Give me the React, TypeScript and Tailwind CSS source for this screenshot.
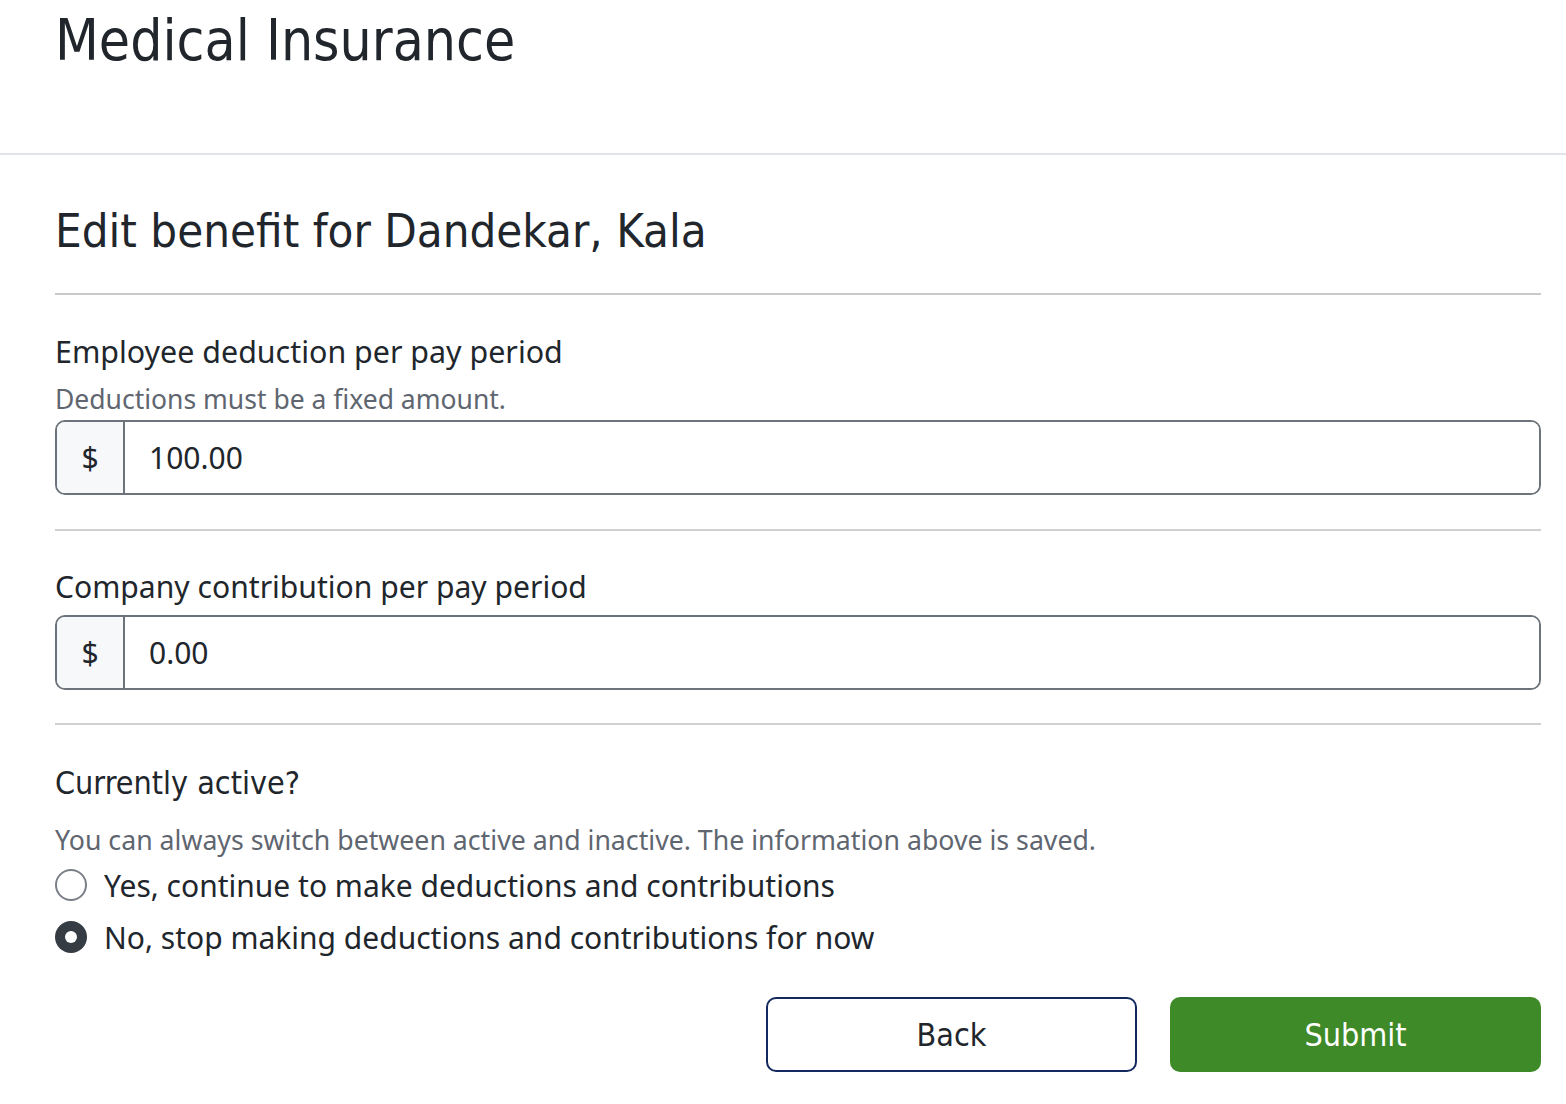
const condensed = { fontFamily: '"DejaVu Sans Condensed", "Liberation Sans Narrow", Roboto, sans-serif' };

function MoneyInput({ value }: { value: string }) {
  return (
    <div className="flex h-[75px] w-full overflow-hidden rounded-[10px] border-2 border-[#6d737a]">
      <div className="flex w-[68px] items-center justify-center border-r-2 border-[#6d737a] bg-[#f6f8fa] text-[30px] text-[#21262c]">
        $
      </div>
      <div className="flex flex-1 items-center bg-white pl-[24px] text-[30px] text-[#21262c]">{value}</div>
    </div>
  );
}

function Radio({ checked, label }: { checked?: boolean; label: string }) {
  return (
    <label className="flex h-[52px] items-center gap-[17px]">
      {checked ? (
        <span className="flex h-[32px] w-[32px] items-center justify-center rounded-full bg-[#363c44]">
          <span className="h-[12px] w-[12px] rounded-full bg-white" />
        </span>
      ) : (
        <span className="h-[32px] w-[32px] rounded-full border-2 border-[#7b8088] bg-white" />
      )}
      <span className="text-[30px] text-[#21262c]">{label}</span>
    </label>
  );
}

export default function App() {
  return (
    <div className="min-h-screen bg-white" style={{ fontFamily: '"Noto Sans", Inter, sans-serif' }}>
      <header className="h-[155px] border-b-2 border-[#e1e5ea] px-[55px]">
        <h1 className="pt-[5px] text-[56.5px] leading-[72px] text-[#21262c]" style={condensed}>
          Medical Insurance
        </h1>
      </header>

      <main className="px-[55px] pr-[25px]">
        <h2 className="border-b-2 border-[#c9c9c9] pt-[43px] pb-[29px] text-[47px] leading-[66px] text-[#21262c]" style={condensed}>
          Edit benefit for Dandekar, Kala
        </h2>

        <section className="border-b-2 border-[#d0d0d0] pt-[35px] pb-[34px]">
          <div className="text-[30.4px] leading-[44px] text-[#21262c]">Employee deduction per pay period</div>
          <div className="mt-[6px] mb-[2px] text-[26.5px] leading-[38px] text-[#5f6670]">Deductions must be a fixed amount.</div>
          <MoneyInput value="100.00" />
        </section>

        <section className="border-b-2 border-[#d0d0d0] pt-[34px] pb-[33px]">
          <div className="mb-[6px] text-[30.1px] leading-[44px] text-[#21262c]">Company contribution per pay period</div>
          <MoneyInput value="0.00" />
        </section>

        <section className="pt-[36px]">
          <div className="text-[32px] leading-[44px] text-[#21262c]" style={condensed}>
            Currently active?
          </div>
          <div className="mt-[16px] text-[26.7px] leading-[38px] text-[#5f6670]">
            You can always switch between active and inactive. The information above is saved.
          </div>
          <div className="flex flex-col">
            <Radio label="Yes, continue to make deductions and contributions" />
            <Radio checked label="No, stop making deductions and contributions for now" />
          </div>
        </section>

        <div className="mt-[34px] flex justify-end gap-[33px]">
          <button className="h-[75px] w-[371px] rounded-[10px] border-2 border-[#13295e] bg-white text-[32px] text-[#21262c]" style={condensed}>
            Back
          </button>
          <button className="h-[75px] w-[371px] rounded-[10px] bg-[#3e8a28] text-[32px] text-white" style={condensed}>
            Submit
          </button>
        </div>
      </main>
    </div>
  );
}
